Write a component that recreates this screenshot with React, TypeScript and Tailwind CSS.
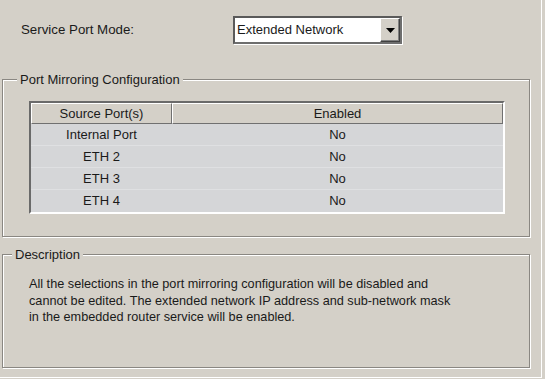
import React from "react";

const rows = [
  ["Internal Port", "No"],
  ["ETH 2", "No"],
  ["ETH 3", "No"],
  ["ETH 4", "No"],
];

function Group({
  title,
  left,
  className,
  children,
}: {
  title: string;
  left: string;
  className: string;
  children?: React.ReactNode;
}) {
  return (
    <div
      className={
        "relative ml-[2px] w-[528px] border border-[#8a8782] shadow-[inset_1px_1px_0_#ffffff,1px_1px_0_#ffffff] " +
        className
      }
    >
      <div className={"absolute top-[-8px] bg-[#d4d0c8] px-[3px] text-[13px] leading-[16px] text-[#1a1a1a] " + left}>
        {title}
      </div>
      {children}
    </div>
  );
}

export default function App() {
  return (
    <div
      className="relative h-[379px] w-[545px] overflow-hidden bg-[#d4d0c8] text-[#1a1a1a]"
      style={{ fontFamily: '"Liberation Sans", Arial, sans-serif' }}
    >
      <div className="flex h-[378px] w-[542px] flex-col border-b border-r border-b-white border-r-white pt-[16px]">
        {/* Service port mode row */}
        <div className="flex h-[28px] items-center">
          <div className="ml-[21px] w-[212px] text-[13.3px]">Service Port Mode:</div>
          <div className="flex h-[28px] w-[169px] border-2 border-t-[#5a5a5a] border-l-[#5a5a5a] border-r-[#6e6e6e] border-b-[#6e6e6e] bg-white shadow-[1px_1px_0_#ffffff]">
            <div className="flex flex-1 items-center pl-[2px] text-[13px]">Extended Network</div>
            <div className="flex w-[20px] items-center justify-center border border-t-white border-l-white border-r-[#404040] border-b-[#404040] bg-[#d4d0c8] shadow-[inset_-1px_-1px_0_#808080]">
              <svg width="9" height="5" viewBox="0 0 9 5">
                <polygon points="0,0 9,0 4.5,5" fill="#000" />
              </svg>
            </div>
          </div>
        </div>

        {/* Port mirroring group */}
        <Group title="Port Mirroring Configuration" left="left-[14px]" className="mt-[35px] h-[158px]">
          <div className="ml-[26px] mt-[21px] w-[476px] border-2 border-t-[#6a6a6a] border-l-[#6a6a6a] border-r-white border-b-white">
            <div className="flex h-[21px] text-[13px]">
              <div className="flex w-[141px] items-center justify-center border border-t-white border-l-white border-r-[#707070] border-b-[#707070] bg-[#d4d0c8]">
                Source Port(s)
              </div>
              <div className="flex flex-1 items-center justify-center border border-t-white border-l-white border-r-[#707070] border-b-[#707070] bg-[#d4d0c8]">
                Enabled
              </div>
            </div>
            <div className="bg-[#d5d6d8]">
              {rows.map(([p, e], i) => (
                <div
                  key={p}
                  className={
                    "flex h-[22px] items-center text-[13px] " +
                    (i < rows.length - 1 ? "border-b border-b-[#dfe0e2]" : "")
                  }
                >
                  <div className="w-[141px] text-center">{p}</div>
                  <div className="flex-1 text-center">{e}</div>
                </div>
              ))}
            </div>
          </div>
        </Group>

        {/* Description group */}
        <Group title="Description" left="left-[9px]" className="mt-[17px] h-[114px]">
          <div className="ml-[26px] mt-[21px] text-[12.7px] leading-[16.5px]">
            All the selections in the port mirroring configuration will be disabled and
            <br />
            cannot be edited. The extended network IP address and sub-network mask
            <br />
            in the embedded router service will be enabled.
          </div>
        </Group>
      </div>
    </div>
  );
}
